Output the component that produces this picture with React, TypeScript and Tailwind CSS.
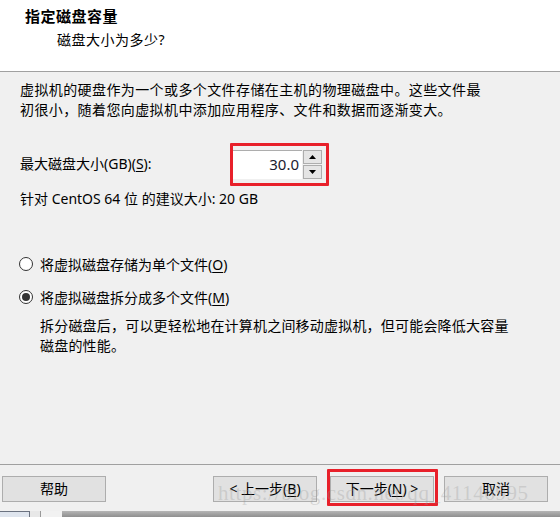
import React from "react";

const font = { fontFamily: '"Noto Sans", "Noto Sans CJK SC", sans-serif' };

function U({ c }: { c: string }) {
  return <span className="underline underline-offset-2 decoration-1">{c}</span>;
}

function Radio({ checked }: { checked?: boolean }) {
  return (
    <span className="w-[14px] h-[14px] rounded-full border border-[#333] bg-white flex items-center justify-center shrink-0">
      {checked && <span className="w-[8px] h-[8px] rounded-full bg-[#333]" />}
    </span>
  );
}

function Btn({ children }: { children: React.ReactNode }) {
  return (
    <div className="w-[104px] h-[26px] bg-[#e1e1e1] border border-[#adadad] flex items-center justify-center text-[14px] text-black leading-none">
      {children}
    </div>
  );
}

export default function App() {
  return (
    <div className="relative w-[560px] h-[517px] bg-[#f0f0f0] overflow-hidden text-black" style={font}>
      {/* header */}
      <div className="h-[72px] bg-white border-b border-[#a0a0a0] flex flex-col">
        <div className="pl-[25px] pt-[6px] text-[15px] font-bold leading-[20px] tracking-[0.5px]">指定磁盘容量</div>
        <div className="pl-[57px] pt-[4px] text-[14px] leading-[20px] tracking-[0.5px]">磁盘大小为多少?</div>
      </div>

      {/* body */}
      <div className="h-[393px] border-b border-[#a0a0a0] pl-[20px] pt-[8px] text-[14px]">
        <div className="leading-[20px] tracking-[0.4px]">
          <div>虚拟机的硬盘作为一个或多个文件存储在主机的物理磁盘中。这些文件最</div>
          <div>初很小，随着您向虚拟机中添加应用程序、文件和数据而逐渐变大。</div>
        </div>

        <div className="mt-[29px] flex items-center h-[30px]">
          <div className="w-[212px] -mt-[1px]">
            最大磁盘大小(GB)(<U c="S" />):
          </div>
          <div className="flex items-center">
            <div className="w-[70px] h-[29px] bg-white border-t border-l border-[#adadad] flex items-center justify-end pr-[3px] text-[15px] text-[#1a1a2e]">
              30.0
            </div>
            <div className="ml-[1px] flex flex-col gap-[1px]">
              <div className="w-[19px] h-[14px] bg-[#e5e5e5] border border-[#adadad] flex items-center justify-center">
                <svg width="7" height="4" viewBox="0 0 7 4"><path d="M3.5 0L7 4H0z" fill="#000" /></svg>
              </div>
              <div className="w-[19px] h-[14px] bg-[#e5e5e5] border border-[#adadad] flex items-center justify-center">
                <svg width="7" height="4" viewBox="0 0 7 4"><path d="M0 0h7L3.5 4z" fill="#000" /></svg>
              </div>
            </div>
          </div>
        </div>

        <div className="mt-[10px] leading-[20px]">针对 CentOS 64 位 的建议大小: 20 GB</div>

        <div className="mt-[45px] flex items-center gap-[7px] h-[20px] -ml-[1px]">
          <Radio />
          <span>将虚拟磁盘存储为单个文件(<U c="O" />)</span>
        </div>
        <div className="mt-[13px] flex items-center gap-[7px] h-[20px] -ml-[1px]">
          <Radio checked />
          <span>将虚拟磁盘拆分成多个文件(<U c="M" />)</span>
        </div>
        <div className="mt-[9px] pl-[20px] leading-[20px] tracking-[0.2px]">
          <div>拆分磁盘后，可以更轻松地在计算机之间移动虚拟机，但可能会降低大容量</div>
          <div>磁盘的性能。</div>
        </div>
      </div>

      {/* footer */}
      <div className="h-[46px] flex items-start pt-[11px] pl-[2px] pr-[12px] justify-between">
        <Btn>帮助</Btn>
        <div className="flex gap-[10px]">
          <div className="mr-[3px]">
            <Btn>&lt; 上一步(<U c="B" />)</Btn>
          </div>
          <Btn>下一步(<U c="N" />) &gt;</Btn>
          <Btn>取消</Btn>
        </div>
      </div>

      {/* bottom strip */}
      <div className="h-[6px] flex bg-gradient-to-b from-[#b5b5b5] to-[#8f8f8f]">
        <div className="w-[30px] bg-[#dfe5ee] border-t border-r border-[#6b7280]" />
        <div className="w-[10px] bg-[#e8e8e8]" />
        <div className="w-[22px] bg-[#f2f2f2] border-l border-[#999]" />
      </div>

      {/* annotation boxes */}
      <div className="absolute left-[230px] top-[143px] w-[99px] h-[43px] border-[3px] border-[#e8202a] rounded-[1px]" />
      <div className="absolute left-[327px] top-[469px] w-[111px] h-[37px] border-[3px] border-[#e8202a] rounded-[1px]" />

      {/* watermark */}
      <div
        className="absolute left-[218px] top-[483px] text-[21px] leading-none text-[rgba(150,150,150,0.3)] tracking-[0.6px] pointer-events-none"
        style={{ fontFamily: '"Liberation Serif", serif' }}
      >
        https://blog.csdn.net/qq_41146995
      </div>
    </div>
  );
}
